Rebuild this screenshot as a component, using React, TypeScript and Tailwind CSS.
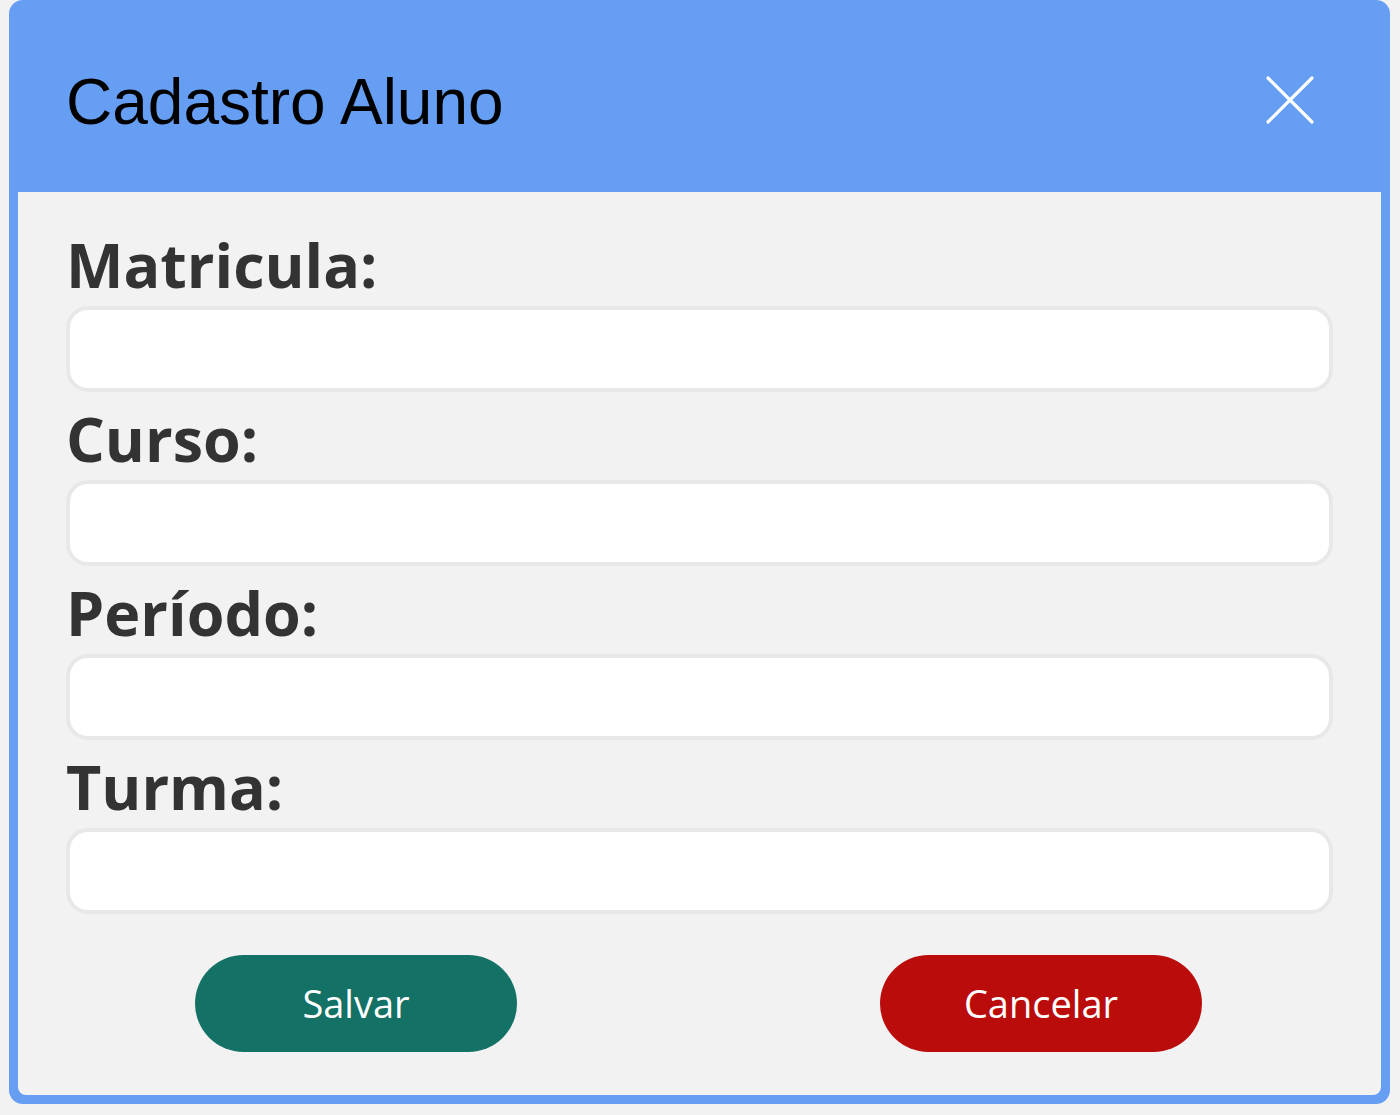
import React from "react";

const fields = ["Matricula:", "Curso:", "Período:", "Turma:"];

export default function App() {
  return (
    <div className="min-h-[1115px] w-[1400px] bg-[#f2f2f2] pl-[9px] pr-[10px]">
      <div className="flex h-[1104px] flex-col rounded-[14px] bg-[#659ef2] px-[9px] pb-[9px]">
        <div className="flex h-[192px] shrink-0 items-start justify-between pl-[48px] pr-[66px]">
          <h1
            className="mt-[64px] text-[64px] leading-[76px] text-black"
            style={{ fontFamily: '"Liberation Sans", Arial, sans-serif' }}
          >
            Cadastro Aluno
          </h1>
          <svg width="50" height="50" viewBox="0 0 50 50" className="mt-[75px]">
            <path d="M3 3 L47 47 M47 3 L3 47" stroke="#ffffff" strokeWidth="3.2" strokeLinecap="round" />
          </svg>
        </div>
        <div
          className="flex flex-1 flex-col rounded-b-[8px] bg-[#f2f2f2] px-[48px] pt-[26px]"
          style={{ fontFamily: '"Open Sans", sans-serif' }}
        >
          {fields.map((f) => (
            <div key={f} className="flex flex-col">
              <label className="block h-[88px] text-[61px] font-bold leading-[94px] text-[#333333]">{f}</label>
              <input className="h-[86px] w-full rounded-[22px] border-4 border-[#e8e8e8] bg-white outline-none" />
            </div>
          ))}
          <div className="mt-[41px] flex justify-between pl-[129px] pr-[131px]">
            <button className="flex h-[97px] w-[322px] items-center justify-center rounded-full bg-[#147166] text-[38px] text-white">
              Salvar
            </button>
            <button className="flex h-[97px] w-[322px] items-center justify-center rounded-full bg-[#bb0c0c] text-[38px] text-white">
              Cancelar
            </button>
          </div>
        </div>
      </div>
    </div>
  );
}
